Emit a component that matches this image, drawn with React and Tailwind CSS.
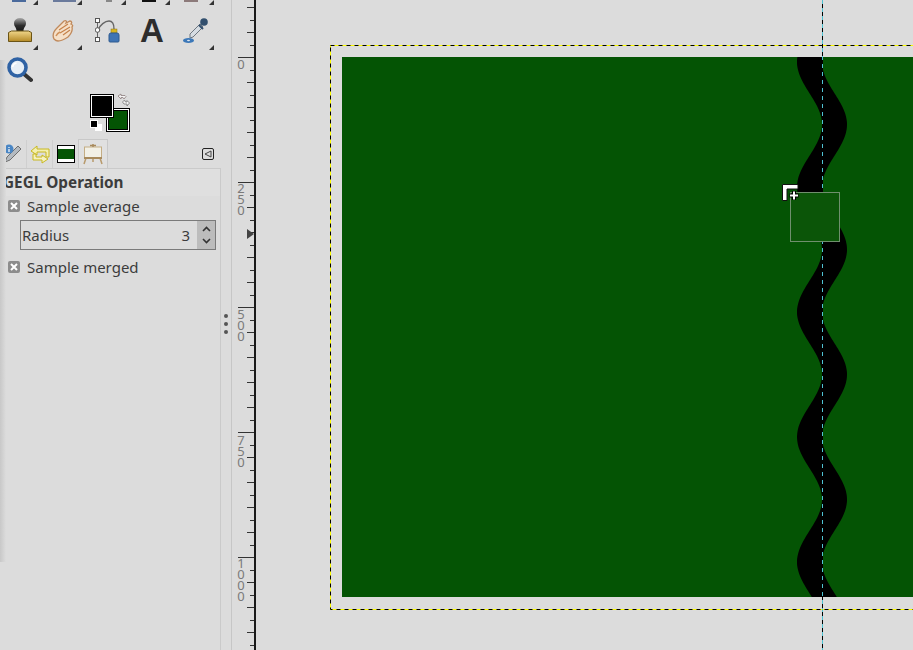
import React from "react";

// tick marks every 12.5px, starting above the 0 mark
const ticks = [];
for (let i = -4; i <= 47; i++) {
  const y = 57 + i * 12.5;
  const major = i % 10 === 0;
  const mid = !major && i % 2 === 0;
  ticks.push({ y: Math.round(y), x: major ? 6 : mid ? 15 : 18 });
}

const rulerLabels = [
  { digits: "0", y: 64 },
  { digits: "250", y: 188 },
  { digits: "500", y: 314 },
  { digits: "750", y: 440 },
  { digits: "1000", y: 563 },
];

// black wave band, constant horizontal width
const wavePoints = () => {
  const left = [];
  const right = [];
  for (let y = 0; y <= 540; y += 2) {
    const center = 480 - 12.5 * Math.cos((2 * Math.PI * (y - 5)) / 125);
    left.push(`${(center - 12.5).toFixed(1)},${y}`);
    right.unshift(`${(center + 12.5).toFixed(1)},${y}`);
  }
  return [...left, ...right].join(" ");
};

const Corner = () => (
  <svg width="6" height="6" className="absolute right-[3px] bottom-[-1px]">
    <path d="M5 0V5H0Z" fill="#333" />
  </svg>
);

const StampIcon = () => (
  <svg width="26" height="26" viewBox="0 0 26 26">
    <defs>
      <linearGradient id="stampBase" x1="0" y1="0" x2="0" y2="1">
        <stop offset="0" stopColor="#f0d68a" />
        <stop offset="1" stopColor="#b58a26" />
      </linearGradient>
      <linearGradient id="stampKnob" x1="0" y1="0" x2="0" y2="1">
        <stop offset="0" stopColor="#a8a8a8" />
        <stop offset="0.5" stopColor="#2e2e2e" />
        <stop offset="1" stopColor="#111" />
      </linearGradient>
    </defs>
    <path d="M7 6a6 5 0 0 1 12 0c0 4-2.500 4-2.500 8v2h-7v-2C9.500 10 7 10 7 6Z" fill="url(#stampKnob)" />
    <path d="M1.500 15.500l3-1.500h17l3 1.500v9h-23Z" fill="url(#stampBase)" stroke="#6b5416" />
  </svg>
);

const HealIcon = () => (
  <svg width="26" height="26" viewBox="0 0 26 26">
    <path
      d="M3 22c-2-4 0-8 3-11l7-7c2-1 3 0 2 2l4-2c2 0 2 2 1 3 2 1 2 2 1 3 1 4-1 7-4 10-3 2-7 4-10 4-2 0-3-1-4-2Z"
      fill="#f5e0c8"
      stroke="#c08a5c"
      strokeWidth="1.300"
    />
    <path d="M8 13l9-6M9 16l10-6M12 18l7-5" stroke="#c6824a" strokeWidth="1.200" fill="none" />
    <path d="M5 19c1-2 2-3 4-4" stroke="#d0925c" strokeWidth="1.500" fill="none" />
  </svg>
);

const PathIcon = () => (
  <svg width="26" height="28" viewBox="0 0 26 28">
    <path d="M3 14C5 9 10 5 14 5c4 0 5 3 5 8" stroke="#666" strokeWidth="1.300" fill="none" />
    <path d="M2.500 4v19" stroke="#666" />
    <rect x="0.500" y="2.500" width="4" height="4" fill="#fff" stroke="#555" />
    <circle cx="2.500" cy="14" r="2.300" fill="#fff" stroke="#555" />
    <rect x="0.500" y="21.500" width="4" height="4" fill="#fff" stroke="#555" />
    <rect x="16" y="13" width="6" height="4" fill="#d8b520" stroke="#8a7414" strokeWidth="0.500" />
    <path d="M16 17h6a2 2 0 0 1 2 2v6a1 1 0 0 1-1 1h-8a1 1 0 0 1-1-1v-6a2 2 0 0 1 2-2Z" fill="#3f74b4" stroke="#2f5a90" />
  </svg>
);

const PickerIcon = () => (
  <svg width="26" height="28" viewBox="0 0 26 28">
    <path d="M7 18L17 8l3 3-10 10-3 1Z" fill="#d6dce2" stroke="#6c7680" />
    <circle cx="21" cy="6" r="3.800" fill="#33506e" />
    <path d="M16 9l4 4" stroke="#33506e" strokeWidth="2" />
    <ellipse cx="5.500" cy="24.500" rx="5.500" ry="2.500" fill="#3c78b8" />
    <ellipse cx="5.500" cy="24.500" rx="1.500" ry="0.800" fill="#dde6ee" />
  </svg>
);

const ZoomIcon = () => (
  <svg width="26" height="26" viewBox="0 0 26 26">
    <path d="M17 17l7 6" stroke="#333" strokeWidth="4" strokeLinecap="round" />
    <circle cx="10.500" cy="10.500" r="8.500" fill="#e6eef6" stroke="#2f62a4" strokeWidth="3.600" />
    <path d="M5.500 10a5 5 0 0 1 4-4" stroke="#fff" strokeWidth="1.500" fill="none" />
  </svg>
);

const SwapIcon = () => (
  <svg width="14" height="14" viewBox="0 0 14 14">
    <path d="M1 3l3-2v1.500h4l1 1L7 6 6 4.500H4V6Z" fill="#f4f4f4" stroke="#8c7c7c" strokeWidth="0.800" />
    <path d="M12.500 10l-2.500 3v-2H7L5.500 9l2-2 1 2H10V7.500Z" fill="#f4f4f4" stroke="#777" strokeWidth="0.800" />
  </svg>
);

const OptionsIcon = () => (
  <svg width="22" height="22" viewBox="0 0 22 22">
    <path d="M3 19l2-5L16 3l3 3L8 17Z" fill="#b4bac0" stroke="#6e6e6e" />
    <circle cx="7" cy="6" r="4.500" fill="#4a86c4" />
    <path d="M7 4v1M7 6v3" stroke="#fff" strokeWidth="1.200" />
  </svg>
);

const UndoIcon = () => (
  <svg width="22" height="22" viewBox="0 0 22 22">
    <path d="M8 3L2 8l6 4v-3h9v5h3V6H8Z" fill="#f4f0b0" stroke="#c8b820" />
    <path d="M13 20l6-4-6-4v2H7v-3H4v6h9Z" fill="#f6f2c0" stroke="#c8b820" />
  </svg>
);

const ImagesIcon = () => (
  <svg width="22" height="22" viewBox="0 0 22 22">
    <path d="M4 15l-2 6M18 15l2 6M11 15v4" stroke="#b89a6c" strokeWidth="1.500" />
    <rect x="2.500" y="4" width="17" height="11" fill="#f2f0e6" stroke="#c4ad84" />
    <path d="M8 2.500h6M11 1v3" stroke="#a88a5c" strokeWidth="1.500" />
    <path d="M2 15h18" stroke="#a88a5c" strokeWidth="2" />
  </svg>
);

const Tool = ({ children, corner }) => (
  <div className="relative flex h-[40px] w-[44px] items-center justify-center">
    {children}
    {corner && <Corner />}
  </div>
);

const TopMarker = ({ className }) => (
  <svg width="6" height="6" className={className}>
    <path d="M5 0V5H0Z" fill="#333" />
  </svg>
);

const Checkbox = ({ label }) => (
  <div className="flex items-center gap-[7px] pl-[8px]">
    <div className="flex h-[12px] w-[12px] items-center justify-center rounded-[2px] bg-[#8c8c8c]">
      <svg width="8" height="8" viewBox="0 0 8 8">
        <path d="M1 1l6 6M7 1L1 7" stroke="#fff" strokeWidth="2" />
      </svg>
    </div>
    <span className="text-[15px] leading-[20px] text-[#3c3c3c]">{label}</span>
  </div>
);

const Tabs = () => (
  <div className="flex h-[29px] items-end pr-[17px]">
    <div className="flex h-[28px] w-[27px] items-center justify-center border-r border-[#cfcfcf]">
      <OptionsIcon />
    </div>
    <div className="flex h-[28px] w-[26px] items-center justify-center border-r border-[#cfcfcf]">
      <UndoIcon />
    </div>
    <div className="flex h-[28px] w-[25px] items-center justify-center">
      <div className="flex h-[18px] w-[18px] flex-col justify-center border border-black bg-white">
        <div className="h-[10px] bg-[#045404]" />
      </div>
    </div>
    <div className="flex h-[29px] w-[30px] items-center justify-center border border-b-0 border-[#c8c8c8] bg-[#e0e0e0]">
      <ImagesIcon />
    </div>
    <div className="mb-[8px] ml-auto flex h-[12px] w-[12px] items-center justify-center rounded-[2px] border border-[#222]">
      <svg width="8" height="8" viewBox="0 0 8 8">
        <path d="M1 4l6-3v6Z" fill="none" stroke="#444" />
      </svg>
    </div>
  </div>
);

const LeftDock = () => (
  <div className="relative flex h-full w-[232px] shrink-0 flex-col border-r border-[#c6c6c6]">
    <div className="pointer-events-none absolute top-[60px] bottom-[88px] left-0 w-[6px] bg-gradient-to-r from-[#c8c8c8] to-[#dcdcdc]" />
    <div className="flex h-[139px] flex-col">
      <div className="relative h-[10px] overflow-hidden">
        <div className="absolute top-0 left-[12px] h-[2px] w-[14px] bg-[#4a6a9c]" />
        <div className="absolute top-0 left-[53px] h-[2px] w-[23px] bg-[#6a7a9c]" />
        <div className="absolute top-0 left-[106px] h-[2px] w-[6px] bg-[#888]" />
        <div className="absolute top-0 left-[142px] h-[2px] w-[14px] bg-[#111]" />
        <div className="absolute top-0 left-[184px] h-[2px] w-[14px] bg-[#8c7a7a]" />
        <TopMarker className="absolute top-0 left-[33px]" />
        <TopMarker className="absolute top-0 left-[77px]" />
        <TopMarker className="absolute top-0 left-[121px]" />
        <TopMarker className="absolute top-0 left-[165px]" />
        <TopMarker className="absolute top-0 left-[209px]" />
      </div>
      <div className="-ml-[2px] flex">
        <Tool corner><StampIcon /></Tool>
        <Tool corner><HealIcon /></Tool>
        <Tool><PathIcon /></Tool>
        <Tool>
          <span className="font-['Liberation_Sans'] text-[33px] leading-none font-bold text-[#2d2d2d]">A</span>
        </Tool>
        <Tool corner><PickerIcon /></Tool>
      </div>
      <div className="-ml-[2px] flex">
        <Tool><ZoomIcon /></Tool>
      </div>
      <div className="relative mt-[4px] h-[40px]">
        <div className="absolute top-[14px] left-[106px] h-[24px] w-[24px] border border-black bg-white p-[1px]">
          <div className="h-full w-full border border-black bg-[#045404]" />
        </div>
        <div className="absolute top-0 left-[90px] h-[24px] w-[24px] border border-black bg-white p-[1px]">
          <div className="h-full w-full bg-black" />
        </div>
        <div className="absolute top-[-1px] left-[117px]">
          <SwapIcon />
        </div>
        {/* default colours */}
        <div className="absolute top-[30px] left-[95px] h-[7px] w-[7px] bg-white" />
        <div className="absolute top-[26px] left-[90px] h-[8px] w-[8px] border border-white bg-black" />
      </div>
    </div>
    <Tabs />
    <div className="mr-[10px] flex flex-1 flex-col border-t border-r border-[#cacaca]">
      <div className="flex h-[27px] items-center bg-[#dfdfdf] pl-[3px] text-[15.3px] font-bold text-[#3c3c3c]">
        GEGL Operation
      </div>
      <div className="flex flex-col">
        <Checkbox label="Sample average" />
        <div className="mt-[4px] mr-[4px] ml-[20px] flex h-[30px] items-stretch border border-[#7a7a7a]">
          <span className="pl-[1px] text-[15px] leading-[28px] text-[#3c3c3c]">Radius</span>
          <span className="ml-auto pr-[7px] text-[15px] leading-[28px] text-[#3c3c3c]">3</span>
          <div className="flex w-[18px] flex-col items-center justify-center gap-[6px] bg-[#bcbcbc]">
            <svg width="9" height="6" viewBox="0 0 9 6"><path d="M1 5l3.500-3.500L8 5" fill="none" stroke="#333" strokeWidth="1.600" /></svg>
            <svg width="9" height="6" viewBox="0 0 9 6"><path d="M1 1l3.500 3.500L8 1" fill="none" stroke="#333" strokeWidth="1.600" /></svg>
          </div>
        </div>
        <div className="mt-[7px]">
          <Checkbox label="Sample merged" />
        </div>
      </div>
    </div>
    <div className="absolute top-[314px] right-[3px] flex flex-col gap-[4px]">
      <div className="h-[4px] w-[4px] rounded-full bg-[#555]" />
      <div className="h-[4px] w-[4px] rounded-full bg-[#555]" />
      <div className="h-[4px] w-[4px] rounded-full bg-[#555]" />
    </div>
  </div>
);

const Ruler = () => (
  <svg width="24" height="650" className="shrink-0">
    {ticks.map((t) => (
      <rect key={t.y} x={t.x} y={t.y} width={22 - t.x} height="1" fill="#333" />
    ))}
    {rulerLabels.map((l) =>
      l.digits.split("").map((d, i) => (
        <text
          key={`${l.digits}-${i}`}
          x="9"
          y={l.y + i * 11 + 5}
          textAnchor="middle"
          fontSize="13"
          fill="#7a7a7a"
          fontFamily="Noto Sans, sans-serif"
        >
          {d}
        </text>
      ))
    )}
    <path d="M15 229l7 5-7 5Z" fill="#444" />
    <rect x="22" y="0" width="2" height="650" fill="#1a1a1a" />
  </svg>
);

const Canvas = () => (
  <div className="relative h-full flex-1 overflow-hidden pt-[45px] pl-[74px]">
    {/* layer boundary with image inside */}
    <div className="relative h-[565px] w-[700px] pt-[12px] pl-[12px]">
      <svg width="700" height="565" className="absolute top-0 left-0">
        <rect x="0.500" y="0.500" width="699" height="564" fill="none" stroke="#ffff00" />
        <rect x="0.500" y="0.500" width="699" height="564" fill="none" stroke="#000" strokeDasharray="4 4" />
      </svg>
      <div className="h-[540px] w-[620px] bg-[#045404]">
        <svg width="620" height="540" className="block">
          <polygon points={wavePoints()} fill="#000" />
        </svg>
      </div>
    </div>
    {/* guide */}
    <svg width="1" height="650" className="absolute top-0 left-[566px]">
      <line x1="0.500" y1="0" x2="0.500" y2="650" stroke="#000" />
      <line x1="0.500" y1="0" x2="0.500" y2="650" stroke="#4fc3d3" strokeDasharray="4 4" />
    </svg>
    {/* brush outline */}
    <div className="absolute top-[192px] left-[534px] h-[50px] w-[50px] border border-[#6f8f6d] bg-[#0b5508]" />
    {/* cursor */}
    <svg width="24" height="24" className="absolute top-[184px] left-[525px]">
      <path d="M1.500 0.500H17V5H6V16.500H1.500Z" fill="#fff" stroke="#111" />
      <path d="M8.500 11.500h9M13 7v9" stroke="#000" strokeWidth="4" />
      <path d="M9 11.500h8M13 7.500v8" stroke="#fff" strokeWidth="2" />
    </svg>
  </div>
);

const App = () => {
  return (
    <div className="flex h-[650px] w-[913px] overflow-hidden bg-[#dcdcdc] font-['Noto_Sans',sans-serif]">
      <LeftDock />
      <Ruler />
      <Canvas />
    </div>
  );
};

export default App;
